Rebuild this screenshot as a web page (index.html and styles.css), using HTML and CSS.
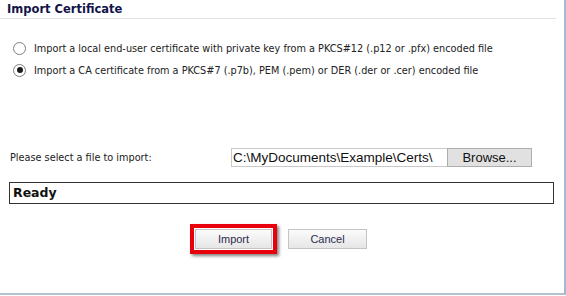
FILE: index.html
```html
<!DOCTYPE html>
<html lang="en">
<head>
  <meta charset="UTF-8" />
  <title>Import Certificate</title>
  <link rel="stylesheet" href="styles.css">
</head>
<body>
  <div class="panel">
    <h2 class="title">Import Certificate</h2>

    <div class="options">
      <label class="option">
        <span class="radio"></span>
        Import a local end-user certificate with private key from a PKCS#12 (.p12 or .pfx) encoded file
      </label>
      <label class="option">
        <span class="radio checked"></span>
        Import a CA certificate from a PKCS#7 (.p7b), PEM (.pem) or DER (.der or .cer) encoded file
      </label>
    </div>

    <div class="file-row">
      <span class="file-label">Please select a file to import:</span>
      <div class="file-input">
        <span class="file-path">C:\MyDocuments\Example\Certs\</span>
        <button class="browse">Browse...</button>
      </div>
    </div>

    <div class="status">Ready</div>

    <div class="actions">
      <div class="highlight">
        <button class="btn">Import</button>
      </div>
      <button class="btn">Cancel</button>
    </div>
  </div>
</body>
</html>
```

FILE: styles.css
```css
* {
  margin: 0;
  padding: 0;
  box-sizing: border-box;
}

body {
  background: #fff;
  font-family: "DejaVu Sans Condensed", "DejaVu Sans", sans-serif;
  font-size: 10.8px;
  color: #222;
}

.panel {
  width: 566px;
  height: 295px;
  border-right: 2px solid #a3b8d6;
  border-bottom: 2px solid #b2c0cf;
  margin-right: 1px;
}

.title {
  margin-right: 8px;
  padding: 2px 0 2px 7px;
  font-family: "DejaVu Sans", sans-serif;
  font-size: 11.5px;
  font-weight: bold;
  color: #14144a;
  border-bottom: 1px solid #e3e3e3;
}

.options {
  padding: 22px 0 0 13px;
  display: flex;
  flex-direction: column;
  gap: 8px;
}

.option {
  display: flex;
  align-items: center;
  gap: 8px;
  height: 14px;
}

.radio {
  width: 13px;
  height: 13px;
  border: 1px solid #7d7d7d;
  border-radius: 50%;
  background: #fff;
  display: flex;
  align-items: center;
  justify-content: center;
}

.radio.checked::after {
  content: "";
  width: 6px;
  height: 6px;
  border-radius: 50%;
  background: #1a1a1a;
}

.file-row {
  margin-top: 71px;
  padding-left: 10px;
  display: flex;
  align-items: center;
}

.file-label {
  width: 221px;
}

.file-input {
  display: flex;
  height: 19px;
  border: 1px solid #c8c8c8;
  border-right: none;
}

.file-path {
  width: 215px;
  overflow: hidden;
  white-space: nowrap;
  font-family: "Liberation Sans", sans-serif;
  font-size: 13.5px;
  line-height: 17px;
  padding-left: 1px;
  color: #111;
}

.browse {
  width: 85px;
  height: 19px;
  margin-top: -1px;
  background: #e1e1e1;
  border: 1px solid #adadad;
  font-family: "Liberation Sans", sans-serif;
  font-size: 13px;
  color: #111;
}

.status {
  margin: 15px 10px 0 9px;
  height: 22px;
  border: 1px solid #333;
  padding-left: 3px;
  font-family: "DejaVu Sans", sans-serif;
  font-size: 12.5px;
  font-weight: bold;
  line-height: 20px;
  color: #111;
}

.actions {
  margin-top: 20px;
  padding-left: 190px;
  display: flex;
  align-items: center;
  gap: 11px;
}

.highlight {
  padding: 1px;
  border: 4px solid #e8000d;
  box-shadow: 2px 2px 3px rgba(0, 0, 0, 0.5);
}

.highlight .btn {
  display: block;
  width: 77px;
}

.btn {
  width: 79px;
  height: 20px;
  background: linear-gradient(#fbfbfb, #e6e6e6);
  border: 1px solid #c4c4c4;
  font-family: "Liberation Sans", sans-serif;
  font-size: 11px;
  color: #2b2b4d;
}
```
